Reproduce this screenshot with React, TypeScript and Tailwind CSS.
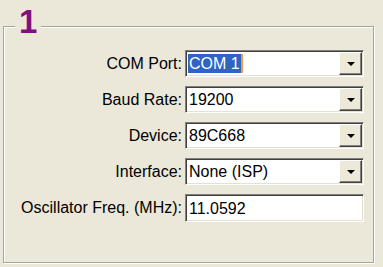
import React from "react";

const font = { fontFamily: '"Liberation Sans", Arial, sans-serif' };

function Arrow() {
  return (
    <div className="flex h-[23px] w-[23px] items-center justify-center border border-t-white border-l-white border-r-[#404040] border-b-[#404040] bg-[#ece9d8] shadow-[inset_-1px_-1px_0_#808080]">
      <svg width="8" height="4" viewBox="0 0 8 4">
        <polygon points="0,0 8,0 4,4" fill="#000" />
      </svg>
    </div>
  );
}

function Combo({ value, selected }: { value: string; selected?: boolean }) {
  return (
    <div className="flex h-[27px] w-[179px] items-center justify-between border border-[#808080] border-b-white border-r-white bg-white pl-[2px] pr-[1px] shadow-[inset_1px_1px_0_#404040,inset_-1px_-1px_0_#e4e1d4]">
      {selected ? (
        <span className="border-r-2 border-r-[#e8a040] bg-[#2f63c4] px-[1px] leading-[19px] text-white">{value}</span>
      ) : (
        <span className="px-[1px] leading-[19px] text-black">{value}</span>
      )}
      <Arrow />
    </div>
  );
}

function Text({ value }: { value: string }) {
  return (
    <div className="flex h-[28px] w-[179px] items-center border border-[#808080] border-b-white border-r-white bg-white pl-[3px] shadow-[inset_1px_1px_0_#404040,inset_-1px_-1px_0_#e4e1d4]">
      <span className="leading-[19px] text-black">{value}</span>
    </div>
  );
}

function Row({ label, children }: { label: string; children: React.ReactNode }) {
  return (
    <div className="flex items-center gap-[3px]">
      <div className="w-[178px] text-right text-black">{label}</div>
      {children}
    </div>
  );
}

export default function App() {
  return (
    <div className="h-[267px] w-[383px] overflow-hidden bg-[#ebe8da] pt-[26px] pl-[3px] text-[16px]" style={font}>
      <div className="relative h-[237px] w-[371px] border border-[#a9a593] shadow-[inset_1px_1px_0_#fff,1px_1px_0_#fff]">
        {/* group title */}
        <div className="absolute -top-[22px] left-[11px] bg-[#ebe8da] px-[4px] text-[33px] font-bold leading-[34px] text-[#80107e]">
          1
        </div>
        <div className="flex flex-col gap-[9px] pt-[23px]">
          <Row label="COM Port:">
            <Combo value="COM 1" selected />
          </Row>
          <Row label="Baud Rate:">
            <Combo value="19200" />
          </Row>
          <Row label="Device:">
            <Combo value="89C668" />
          </Row>
          <Row label="Interface:">
            <Combo value="None (ISP)" />
          </Row>
          <Row label="Oscillator Freq. (MHz):">
            <Text value="11.0592" />
          </Row>
        </div>
      </div>
    </div>
  );
}
